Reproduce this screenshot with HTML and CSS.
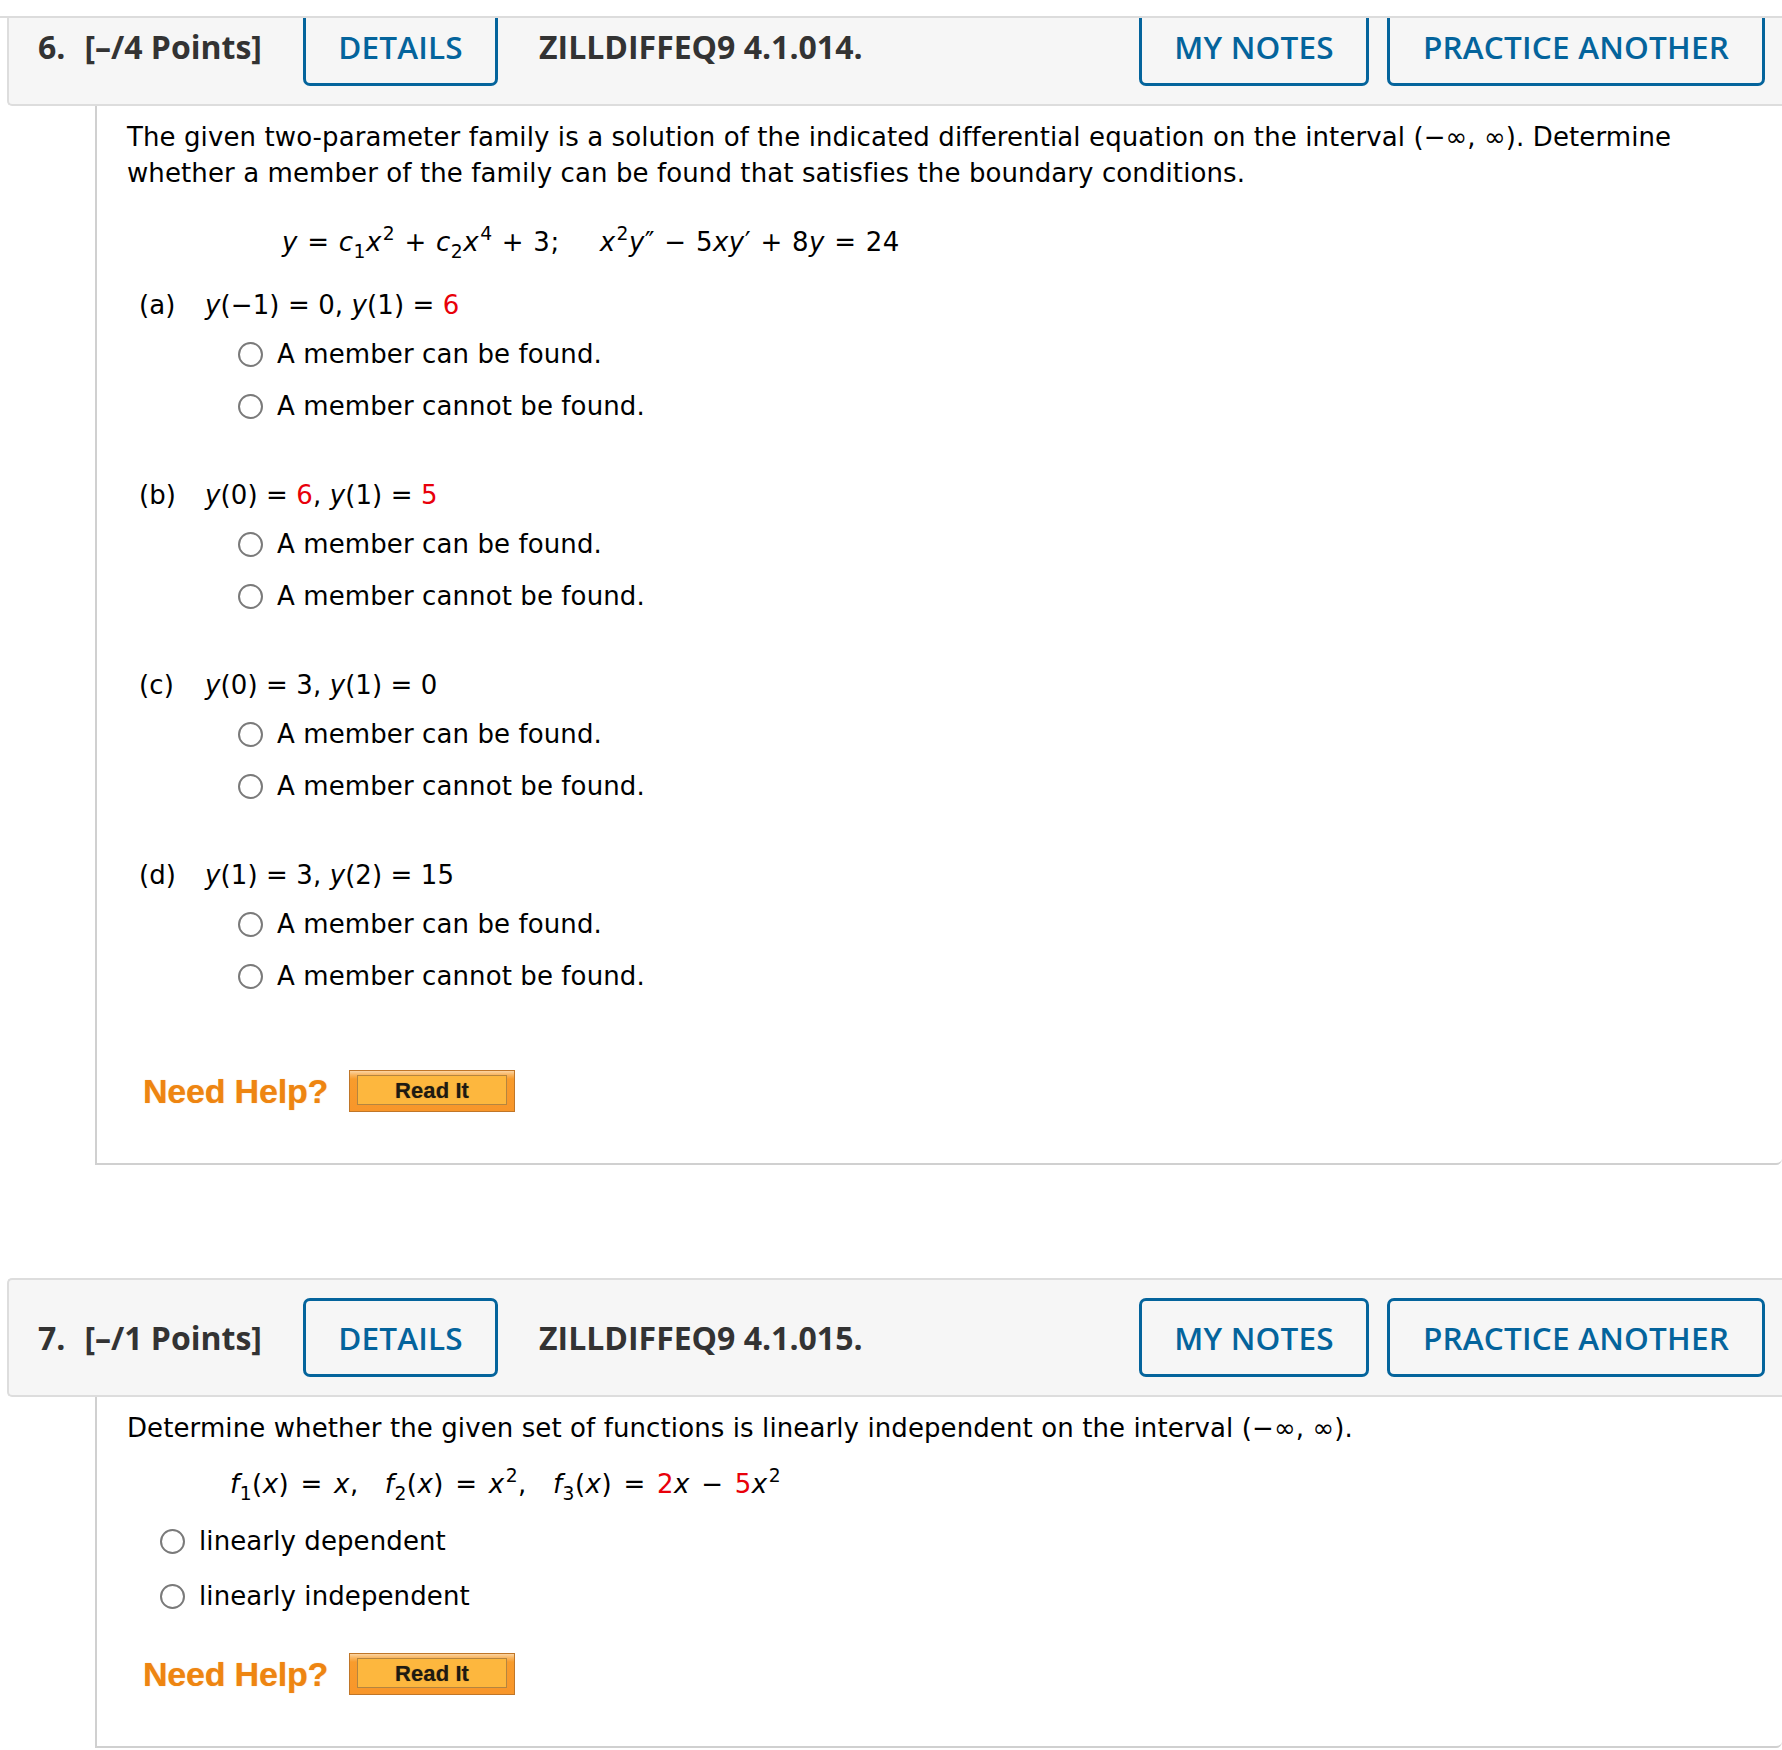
FILE: index.html
```html
<!DOCTYPE html>
<html lang="en">
<head>
<meta charset="utf-8">
<title>ZILLDIFFEQ9 4.1</title>
<link rel="stylesheet" href="styles.css">
</head>
<body>
<div class="topbar"></div>
<main class="page">
  <section class="question q6">
    <div class="qhead">
      <div class="qnum"><span class="n">6.</span><span class="pts">[–/4 Points]</span></div>
      <button class="hbtn details">DETAILS</button>
      <div class="qid">ZILLDIFFEQ9 4.1.014.</div>
      <div class="hright">
        <button class="hbtn notes">MY NOTES</button>
        <button class="hbtn practice">PRACTICE ANOTHER</button>
      </div>
    </div>
    <div class="qbody">
      <p class="prompt"><span class="line">The given two-parameter family is a solution of the indicated differential equation on the interval (−∞, ∞). Determine</span><span class="line">whether a member of the family can be found that satisfies the boundary conditions.</span></p>
      <div class="eq eq6"><i>y</i> = <i>c</i><sub>1</sub><i>x</i><sup>2</sup> + <i>c</i><sub>2</sub><i>x</i><sup>4</sup> + 3;<span class="gap"></span><i>x</i><sup>2</sup><i>y</i>″ − 5<i>xy</i>′ + 8<i>y</i> = 24</div>

      <div class="part first">
        <div class="plabel-row"><span class="plabel">(a)</span><i>y</i>(−1) = 0, <i>y</i>(1) = <span class="red">6</span></div>
        <div class="opts">
          <label class="opt"><span class="radio"></span>A member can be found.</label>
          <label class="opt"><span class="radio"></span>A member cannot be found.</label>
        </div>
      </div>
      <div class="part">
        <div class="plabel-row"><span class="plabel">(b)</span><i>y</i>(0) = <span class="red">6</span>, <i>y</i>(1) = <span class="red">5</span></div>
        <div class="opts">
          <label class="opt"><span class="radio"></span>A member can be found.</label>
          <label class="opt"><span class="radio"></span>A member cannot be found.</label>
        </div>
      </div>
      <div class="part">
        <div class="plabel-row"><span class="plabel">(c)</span><i>y</i>(0) = 3, <i>y</i>(1) = 0</div>
        <div class="opts">
          <label class="opt"><span class="radio"></span>A member can be found.</label>
          <label class="opt"><span class="radio"></span>A member cannot be found.</label>
        </div>
      </div>
      <div class="part">
        <div class="plabel-row"><span class="plabel">(d)</span><i>y</i>(1) = 3, <i>y</i>(2) = 15</div>
        <div class="opts">
          <label class="opt"><span class="radio"></span>A member can be found.</label>
          <label class="opt"><span class="radio"></span>A member cannot be found.</label>
        </div>
      </div>

      <div class="help help6">
        <span class="help-label">Need Help?</span>
        <span class="readit"><span class="readit-inner">Read It</span></span>
      </div>
    </div>
  </section>

  <section class="question q7">
    <div class="qhead">
      <div class="qnum"><span class="n">7.</span><span class="pts">[–/1 Points]</span></div>
      <button class="hbtn details">DETAILS</button>
      <div class="qid">ZILLDIFFEQ9 4.1.015.</div>
      <div class="hright">
        <button class="hbtn notes">MY NOTES</button>
        <button class="hbtn practice">PRACTICE ANOTHER</button>
      </div>
    </div>
    <div class="qbody">
      <p class="prompt"><span class="line">Determine whether the given set of functions is linearly independent on the interval (−∞, ∞).</span></p>
      <div class="eq eq7"><i>f</i><sub>1</sub>(<i>x</i>) = <i>x</i>,<span class="gap2"></span><i>f</i><sub>2</sub>(<i>x</i>) = <i>x</i><sup>2</sup>,<span class="gap2"></span><i>f</i><sub>3</sub>(<i>x</i>) = <span class="red">2</span><i>x</i> − <span class="red">5</span><i>x</i><sup>2</sup></div>
      <div class="opts opts7">
        <label class="opt"><span class="radio"></span>linearly dependent</label>
        <label class="opt"><span class="radio"></span>linearly independent</label>
      </div>
      <div class="help help7">
        <span class="help-label">Need Help?</span>
        <span class="readit"><span class="readit-inner">Read It</span></span>
      </div>
    </div>
  </section>
</main>
</body>
</html>
```
FILE: styles.css
```css
html, body {
  margin: 0;
  padding: 0;
  background: #ffffff;
}

body {
  font-family: "DejaVu Sans", Verdana, sans-serif;
  color: #000000;
  overflow: hidden;
}

.topbar {
  position: fixed;
  top: 0;
  left: 0;
  right: 0;
  height: 16px;
  background: #ffffff;
  border-bottom: 2px solid #dcdcdc;
  z-index: 10;
}

.page {
  padding-left: 7px;
}

/* ---------- question header ---------- */
.qhead {
  display: flex;
  align-items: center;
  background: #f6f6f6;
  border: 2px solid #dddddd;
  border-right: none;
  border-radius: 5px 0 0 5px;
  padding: 18px 17px 18px 29px;
  font-family: "Open Sans", "DejaVu Sans", sans-serif;
  color: #333333;
}

.q6 .qhead {
  margin-top: -13px;
}

.q7 {
  margin-top: 113px;
}

.qnum {
  width: 265px;
  font-size: 32px;
  font-weight: 700;
  white-space: nowrap;
}

.pts {
  margin-left: 19px;
}

.qid {
  margin-left: 41px;
  font-size: 32px;
  font-weight: 700;
  white-space: nowrap;
}

.hright {
  margin-left: auto;
  display: flex;
  gap: 18px;
}

.hbtn {
  box-sizing: border-box;
  height: 79px;
  padding: 0;
  border: 3px solid #04649c;
  border-radius: 7px;
  background: #f6f6f6;
  color: #04649c;
  font-family: "Open Sans", "DejaVu Sans", sans-serif;
  font-size: 31.5px;
  font-weight: 600;
  letter-spacing: 0.2px;
  white-space: nowrap;
  cursor: pointer;
}

.details { width: 195px; }
.notes { width: 230px; }
.practice { width: 378px; }

/* ---------- question body ---------- */
.qbody {
  margin-left: 88px;
  border-left: 2px solid #d0d0d0;
  border-bottom: 2px solid #d0d0d0;
  border-bottom-right-radius: 6px;
  padding: 13px 0 51px 30px;
  font-size: 26px;
  line-height: 36px;
  letter-spacing: 0.1px;
}

.prompt {
  margin: 0;
}

.prompt .line {
  display: block;
  white-space: nowrap;
}

.eq {
  white-space: nowrap;
  line-height: 36px;
  letter-spacing: 0.5px;
}

.eq6 {
  margin-top: 33px;
  padding-left: 155px;
  word-spacing: 0.5px;
}

.eq7 {
  margin-top: 20px;
  padding-left: 103px;
  word-spacing: 2.5px;
}

i {
  font-style: italic;
}

sup, sub {
  font-size: 0.72em;
  line-height: 0;
  position: relative;
  vertical-align: baseline;
}

sup {
  top: -0.6em;
  margin-left: 1px;
}

sub {
  top: 0.38em;
}

.gap {
  display: inline-block;
  width: 40px;
}

.gap2 {
  display: inline-block;
  width: 26px;
}

.red {
  color: #e8000a;
}

/* ---------- parts ---------- */
.part.first {
  margin-top: 27px;
}

.part + .part {
  margin-top: 49px;
}

.plabel-row {
  padding-left: 12px;
  white-space: nowrap;
}

.plabel {
  display: inline-block;
  width: 66px;
}

.opts {
  display: flex;
  flex-direction: column;
  gap: 8px;
  margin-top: 9px;
  padding-left: 111px;
}

.opts7 {
  margin-top: 17px;
  gap: 11px;
  padding-left: 33px;
}

.opt {
  display: flex;
  align-items: center;
  height: 44px;
  white-space: nowrap;
}

.radio {
  box-sizing: border-box;
  width: 25px;
  height: 25px;
  flex: none;
  border: 2px solid #7a7a7a;
  border-radius: 50%;
  background: #ffffff;
  margin-right: 14px;
}

/* ---------- need help ---------- */
.help {
  display: flex;
  align-items: center;
  padding-left: 16px;
}

.help6 {
  margin-top: 72px;
}

.help7 {
  margin-top: 35px;
}

.help-label {
  display: inline-block;
  width: 185px;
  font-family: "Liberation Sans", Arial, sans-serif;
  font-weight: 700;
  font-size: 34px;
  line-height: 42px;
  letter-spacing: -0.2px;
  color: #ee8511;
  white-space: nowrap;
  text-shadow: 0 0 1px rgba(238, 133, 17, 0.6);
}

.readit {
  box-sizing: border-box;
  display: block;
  margin-left: 21px;
  width: 166px;
  height: 42px;
  padding: 4px 7px 6px 7px;
  border: 1px solid #c07628;
  background: linear-gradient(to bottom, #fbd4a2 0px, #f9b45e 4px, #f89c2c 8px, #f8962a 100%);
}

.readit-inner {
  box-sizing: border-box;
  display: block;
  height: 30px;
  border: 1px solid #b5853f;
  background: #fdb73e;
  font-family: "Liberation Sans", Arial, sans-serif;
  font-weight: 700;
  font-size: 22px;
  line-height: 30px;
  color: #1e1a12;
  text-align: center;
  text-shadow: 0 0 1px rgba(0, 0, 0, 0.4);
}
```
